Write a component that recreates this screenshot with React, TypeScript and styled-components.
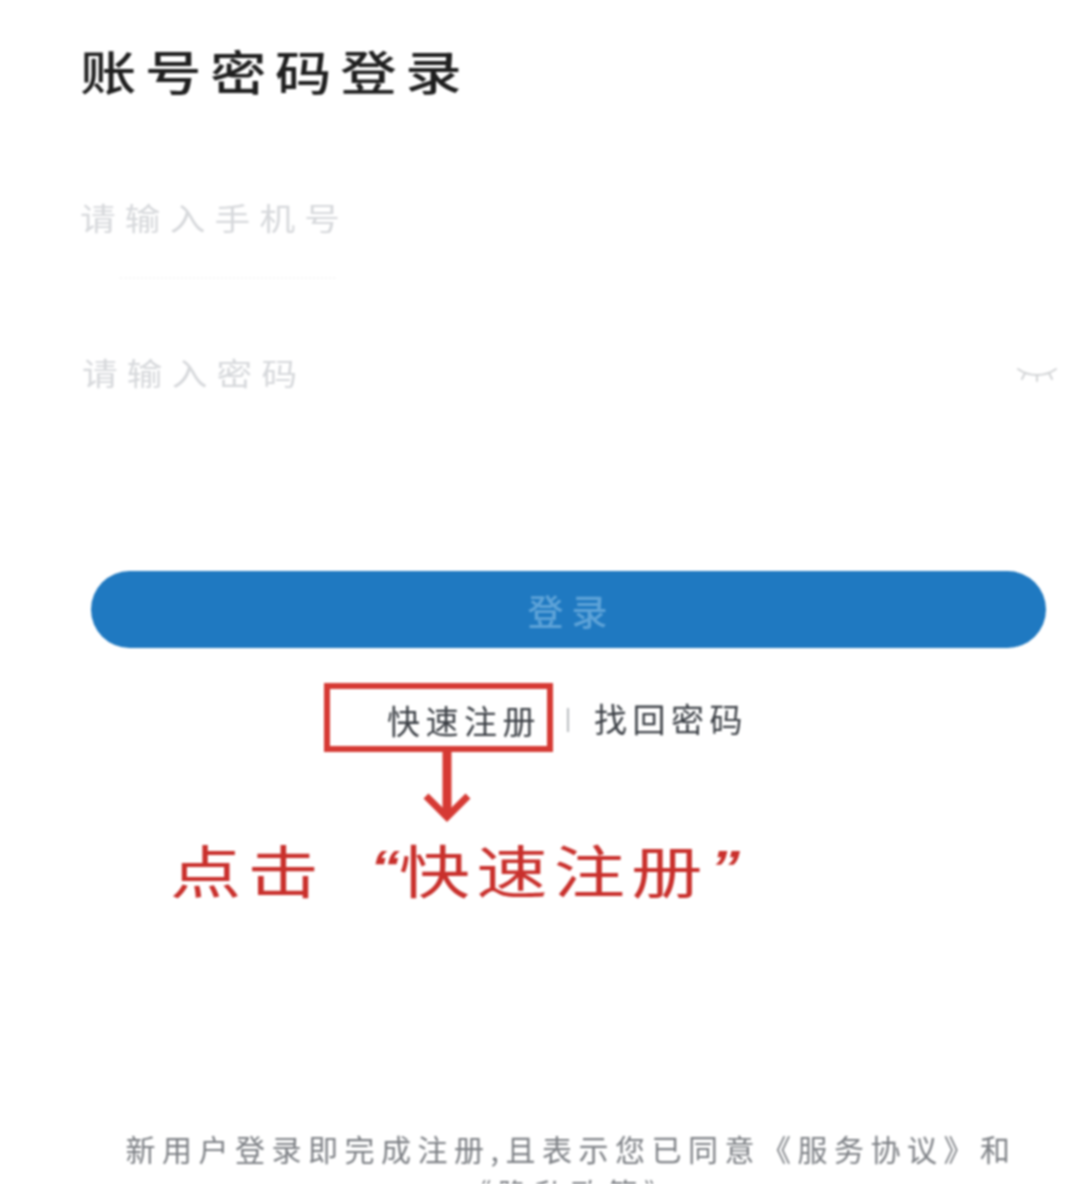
import React from "react";
import styled, { createGlobalStyle } from "styled-components";

const Global = createGlobalStyle`
  html, body { margin: 0; padding: 0; background: #fff; }
  #root { height: 1184px; overflow: hidden; }
`;

const Page = styled.main`
  width: 1070px;
  height: 1184px;
  overflow: hidden;
  display: flex;
  flex-direction: column;
  background: #fff;
  font-family: "Noto Sans CJK SC", "Liberation Sans", sans-serif;
  filter: blur(0.9px);
`;

const Title = styled.h1`
  margin: 40px 0 0 80px;
  height: 60px;
  font-size: 47px;
  line-height: 60px;
  font-weight: 500;
  letter-spacing: 7.2px;
  color: #1f1f1f;
  white-space: nowrap;
  transform: scaleX(1.2);
  transform-origin: left center;
`;

const Field = styled.div<{ $top: number; $left: number }>`
  margin: ${(p) => p.$top}px 12px 0 ${(p) => p.$left}px;
  height: 40px;
  display: flex;
  align-items: center;
  justify-content: space-between;
`;

const Placeholder = styled.span`
  font-size: 31px;
  line-height: 40px;
  letter-spacing: 8px;
  color: #d6d8db;
  white-space: nowrap;
  transform: scaleX(1.15);
  transform-origin: left center;
`;

const FaintRule = styled.div`
  margin: 40px 0 0 120px;
  width: 215px;
  border-top: 2px dotted #f6f6f6;
`;

const EyeIcon = styled.svg`
  width: 42px;
  height: 20px;
  color: #d2d4d6;
  flex: none;
`;

const LoginButton = styled.button`
  margin: 179px 0 0 91px;
  width: 955px;
  height: 77px;
  flex: none;
  border: 0;
  border-radius: 39px;
  background: #1f79c1;
  color: #5ea3d8;
  font-family: inherit;
  font-size: 36px;
  font-weight: 500;
  letter-spacing: 8px;
  padding: 0 0 0 6px;
`;

const Links = styled.div`
  margin: 35px 0 0 324px;
  display: flex;
  align-items: center;
`;

const RegisterBox = styled.div`
  width: 229px;
  height: 69px;
  box-sizing: border-box;
  border: 6px solid #d63a34;
  display: flex;
  align-items: center;
  justify-content: flex-end;
  padding: 4px 6px 0 0;
  white-space: nowrap;
`;

const LinkText = styled.span`
  font-size: 33px;
  line-height: 40px;
  letter-spacing: 5.5px;
  color: #3c4046;
  white-space: nowrap;
`;

const Divider = styled.span`
  width: 2px;
  height: 24px;
  margin: 4px 25px 0 14px;
  background: #b9bcc0;
`;

const Arrow = styled.svg`
  display: block;
  margin: 0 0 0 419px;
  width: 56px;
  height: 70px;
  flex: none;
`;

const Callout = styled.div`
  margin: 12px 0 0 170px;
  height: 68px;
  display: flex;
  align-items: center;
  font-size: 57px;
  line-height: 68px;
  font-weight: 400;
  color: #c9302c;
  white-space: nowrap;
  transform: scaleX(1.25);
  transform-origin: left center;
`;

const CalloutWords = styled.span`
  letter-spacing: 5px;
`;

const Quote = styled.span<{ $before: number; $after: number }>`
  margin: 0 ${(p) => p.$after}px 0 ${(p) => p.$before}px;
  font-family: "Liberation Sans", sans-serif;
  font-size: 48px;
  font-style: italic;
  font-weight: 700;
  align-self: flex-start;
`;

const Agreement = styled.p`
  margin: 224px 0 0;
  width: 1142px;
  text-align: center;
  font-size: 30px;
  line-height: 44px;
  letter-spacing: 6.5px;
  color: #7d8085;
  flex: none;
`;

export default function App() {
  return (
    <>
      <Global />
      <Page>
        <Title>账号密码登录</Title>
        <Field $top={97} $left={80}>
          <Placeholder>请输入手机号</Placeholder>
        </Field>
        <FaintRule />
        <Field $top={73} $left={82}>
          <Placeholder>请输入密码</Placeholder>
          <EyeIcon viewBox="0 0 42 20" fill="none" stroke="currentColor" strokeWidth="2" strokeLinecap="round">
            <path d="M2 7c11 8 27 8 38 0" />
            <path d="M9 11 6 17M21 14v5M33 11l3 6" />
          </EyeIcon>
        </Field>
        <LoginButton>登录</LoginButton>
        <Links>
          <RegisterBox>
            <LinkText>快速注册</LinkText>
          </RegisterBox>
          <Divider />
          <LinkText>找回密码</LinkText>
        </Links>
        <Arrow viewBox="0 0 56 70" fill="none" stroke="#d63a34" strokeWidth="9">
          <path d="M28 0v60" />
          <path d="M7 44 28 65 49 44" strokeWidth="7" />
        </Arrow>
        <Callout>
          <CalloutWords>点击</CalloutWords>
          <Quote $before={36} $after={-1}>“</Quote>
          <CalloutWords>快速注册</CalloutWords>
          <Quote $before={1} $after={0}>”</Quote>
        </Callout>
        <Agreement>
          新用户登录即完成注册,且表示您已同意《服务协议》和
          <br />
          《隐私政策》
        </Agreement>
      </Page>
    </>
  );
}
